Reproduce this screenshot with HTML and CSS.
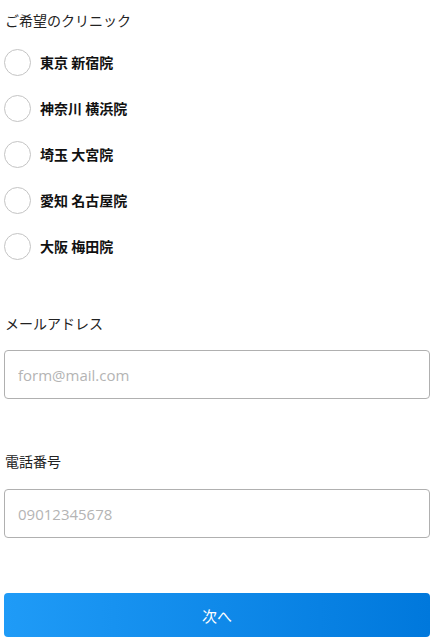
FILE: index.html
```html
<!DOCTYPE html>
<html lang="ja">
<head>
  <meta charset="UTF-8" />
  <meta name="viewport" content="width=device-width, initial-scale=1.0"/>
  <title>ご予約フォーム</title>
  <link rel="stylesheet" href="styles.css">
</head>
<body>

  <form class="form" onsubmit="return false;">
    <div class="field">
      <p class="field-label">ご希望のクリニック</p>
      <div class="radio-list">
        <label class="radio"><input type="radio" name="clinic" value="shinjuku"><span class="radio-mark"></span>東京 新宿院</label>
        <label class="radio"><input type="radio" name="clinic" value="yokohama"><span class="radio-mark"></span>神奈川 横浜院</label>
        <label class="radio"><input type="radio" name="clinic" value="omiya"><span class="radio-mark"></span>埼玉 大宮院</label>
        <label class="radio"><input type="radio" name="clinic" value="nagoya"><span class="radio-mark"></span>愛知 名古屋院</label>
        <label class="radio"><input type="radio" name="clinic" value="umeda"><span class="radio-mark"></span>大阪 梅田院</label>
      </div>
    </div>

    <div class="field field-email">
      <p class="field-label">メールアドレス</p>
      <input class="text-input" type="email" placeholder="form@mail.com">
    </div>

    <div class="field field-tel">
      <p class="field-label">電話番号</p>
      <input class="text-input" type="tel" placeholder="09012345678">
    </div>

    <button class="submit" type="submit">次へ</button>
  </form>

</body>
</html>
```

FILE: styles.css
```css
body {
  margin: 0;
  padding: 10px 3px 0 4px;
  font-family: "Noto Sans CJK JP", "Noto Sans", sans-serif;
  color: #222;
  background: #fff;
}

.form {
  display: flex;
  flex-direction: column;
}

.field-label {
  margin: 0;
  font-size: 14px;
  line-height: 20px;
  padding-left: 1px;
}

.radio-list {
  margin-top: 9px;
  display: flex;
  flex-direction: column;
}

.radio {
  display: flex;
  align-items: center;
  height: 46px;
  font-size: 14px;
  font-weight: bold;
  color: #111;
  cursor: pointer;
}

.radio input {
  display: none;
}

.radio-mark {
  width: 25px;
  height: 25px;
  border: 1px solid #c4c4c4;
  border-radius: 50%;
  margin-right: 9px;
  flex-shrink: 0;
}

.radio input:checked + .radio-mark {
  border: 7px solid #0a84e6;
  width: 13px;
  height: 13px;
}

.field-email {
  margin-top: 44px;
}

.field-tel {
  margin-top: 52px;
}

.text-input {
  display: block;
  box-sizing: border-box;
  width: 100%;
  height: 49px;
  margin-top: 17px;
  padding: 0 13px;
  border: 1px solid #b0b0b0;
  border-radius: 4px;
  font-family: "Open Sans", "Noto Sans", sans-serif;
  font-size: 15px;
  color: #222;
}

.field-tel .text-input {
  margin-top: 18px;
}

.text-input::placeholder {
  color: #b4b4b4;
}

.submit {
  margin-top: 55px;
  height: 44px;
  border: none;
  border-radius: 4px;
  background: linear-gradient(90deg, #1f9bf7, #0078dc);
  color: #fff;
  font-family: "Noto Sans CJK JP", sans-serif;
  font-size: 15px;
  cursor: pointer;
}
```
